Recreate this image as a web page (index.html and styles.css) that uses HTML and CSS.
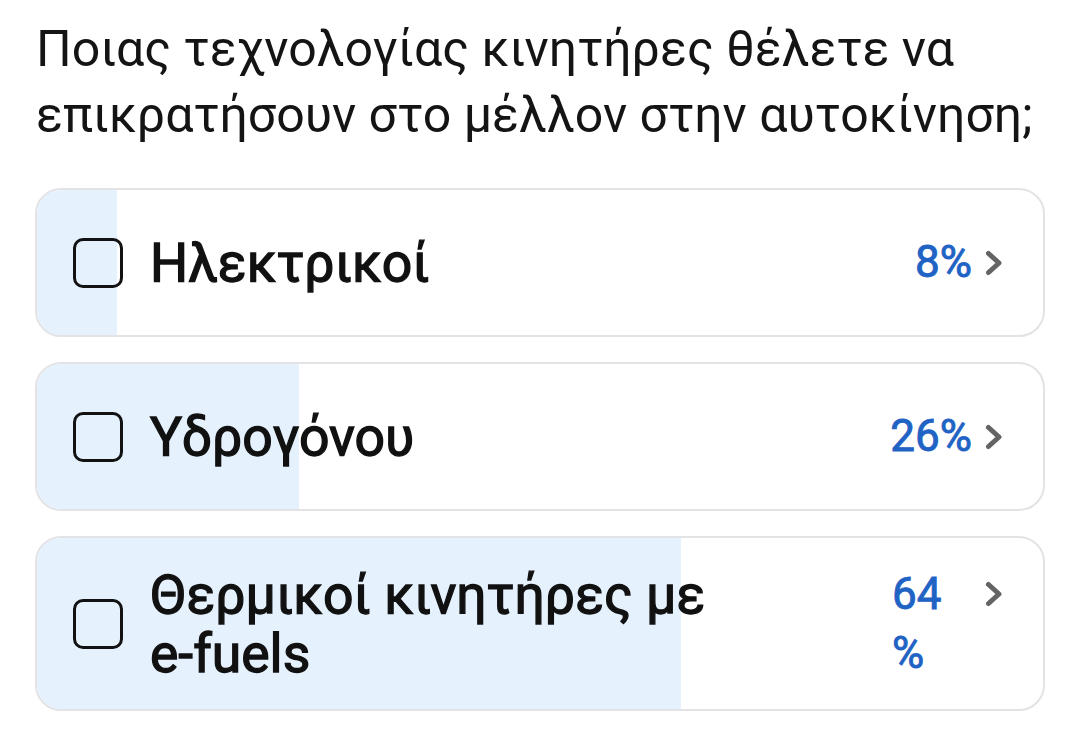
FILE: index.html
```html
<!DOCTYPE html>
<html lang="el">
<head>
    <meta charset="UTF-8">
    <meta name="viewport" content="width=device-width, initial-scale=1.0">
    <title>Poll</title>
    <link rel="stylesheet" href="styles.css">
</head>
<body>
    <div class="poll">
        <h1 class="poll__question">Ποιας τεχνολογίας κινητήρες θέλετε να επικρατήσουν στο μέλλον στην αυτοκίνηση;</h1>

        <div class="poll__options">
            <div class="option">
                <div class="option__fill" style="width: 8%"></div>
                <div class="option__row">
                    <span class="option__box"></span>
                    <span class="option__label">Ηλεκτρικοί</span>
                    <span class="option__pct">8%</span>
                    <svg class="option__chevron" viewBox="0 0 18 26"><path d="M3.5 3.5 14 13 3.5 22.5" /></svg>
                </div>
            </div>
            <div class="option">
                <div class="option__fill" style="width: 26%"></div>
                <div class="option__row">
                    <span class="option__box"></span>
                    <span class="option__label">Υδρογόνου</span>
                    <span class="option__pct">26%</span>
                    <svg class="option__chevron" viewBox="0 0 18 26"><path d="M3.5 3.5 14 13 3.5 22.5" /></svg>
                </div>
            </div>
            <div class="option">
                <div class="option__fill" style="width: 64%"></div>
                <div class="option__row option__row--top">
                    <span class="option__box"></span>
                    <span class="option__label">Θερμικοί κινητήρες με<br>e-fuels</span>
                    <span class="option__pct option__pct--wrap">64<br>%</span>
                    <svg class="option__chevron" viewBox="0 0 18 26"><path d="M3.5 3.5 14 13 3.5 22.5" /></svg>
                </div>
            </div>
        </div>
    </div>
</body>
</html>
```

FILE: styles.css
```css
body {
    font-family: Roboto, "Noto Sans", Arial, sans-serif;
    margin: 0;
    padding: 0;
    background: #ffffff;
    color: #111111;
}
.poll {
    padding: 16px 34px 0 35px;
}
.poll__question {
    font-size: 50px;
    font-weight: 400;
    line-height: 66px;
    margin: 0 0 40px 1px;
    color: #141414;
}
.poll__options {
    display: flex;
    flex-direction: column;
    gap: 25px;
}
.option {
    position: relative;
    border: 2px solid #e3e3e6;
    border-radius: 26px;
    overflow: hidden;
    background: #ffffff;
}
.option__fill {
    position: absolute;
    left: 0;
    top: 0;
    bottom: 0;
    background: #e5f1fd;
}
.option__row {
    position: relative;
    display: flex;
    align-items: center;
    min-height: 145px;
    padding: 0 40px 0 36px;
}
.option__row--top {
    padding-top: 27px;
    padding-bottom: 26px;
    min-height: 0;
}
.option__box {
    flex: none;
    width: 44px;
    height: 44px;
    border: 3.5px solid #121212;
    border-radius: 10px;
    margin-right: 27px;
}
/* no medium face installed, so thicken the regular one a little */
.option__label {
    flex: 1;
    font-size: 53.5px;
    font-weight: 400;
    -webkit-text-stroke: 1.3px #111111;
    line-height: 59px;
    color: #111111;
}
.option__pct {
    font-size: 44px;
    font-weight: 400;
    -webkit-text-stroke: 0.9px #1f63c4;
    color: #1f63c4;
    line-height: 59px;
}
.option__pct--wrap {
    width: 80px;
    align-self: flex-start;
}
.option__chevron {
    flex: none;
    width: 18px;
    height: 26px;
    margin-left: 13px;
    fill: none;
    stroke: #646464;
    stroke-width: 5;
    stroke-linecap: round;
    stroke-linejoin: round;
}
.option__row--top .option__chevron {
    align-self: flex-start;
    margin-top: 16px;
}
```
